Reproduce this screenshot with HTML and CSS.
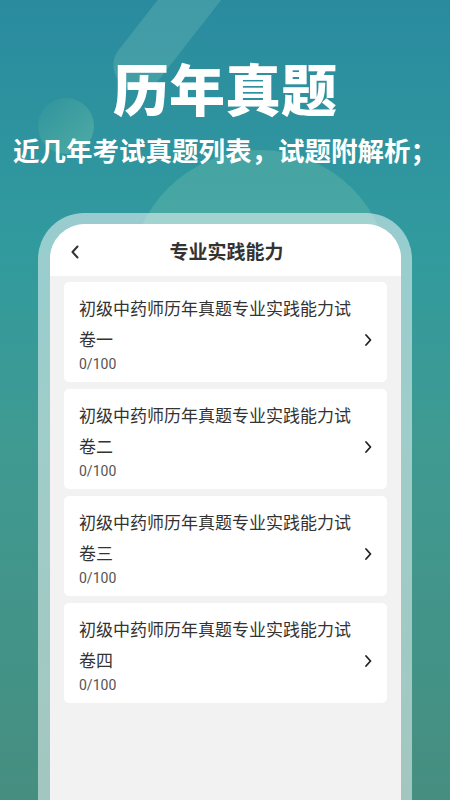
FILE: index.html
```html
<!DOCTYPE html>
<html lang="zh-CN">
<head>
    <meta charset="UTF-8">
    <meta name="viewport" content="width=device-width, initial-scale=1.0">
    <title>历年真题</title>
    <link rel="stylesheet" href="styles.css">
</head>
<body>

    <div class="page">
        <!-- background decoration -->
        <div class="deco deco-bar"></div>
        <div class="deco deco-dot"></div>
        <div class="deco deco-big"></div>

        <div class="hero">
            <h1 class="hero-title">历年真题</h1>
            <p class="hero-sub">近几年考试真题列表，试题附解析；</p>
        </div>

        <div class="phone">
            <div class="screen">
                <div class="topbar">
                    <svg class="back" width="12" height="16" viewBox="0 0 12 16">
                        <path d="M8.5 2.5 L3.5 8 L8.5 13.5" fill="none" stroke="#333" stroke-width="2" stroke-linecap="round" stroke-linejoin="round"/>
                    </svg>
                    <span class="topbar-title">专业实践能力</span>
                </div>

                <div class="list">
                    <div class="paper">
                        <div class="paper-info">
                            <div class="paper-name">初级中药师历年真题专业实践能力试卷一</div>
                            <div class="paper-score">0/100</div>
                        </div>
                        <svg class="arrow" width="10" height="14" viewBox="0 0 10 14">
                            <path d="M3 2 L7.5 7 L3 12" fill="none" stroke="#222" stroke-width="1.8" stroke-linecap="round" stroke-linejoin="round"/>
                        </svg>
                    </div>
                    <div class="paper">
                        <div class="paper-info">
                            <div class="paper-name">初级中药师历年真题专业实践能力试卷二</div>
                            <div class="paper-score">0/100</div>
                        </div>
                        <svg class="arrow" width="10" height="14" viewBox="0 0 10 14">
                            <path d="M3 2 L7.5 7 L3 12" fill="none" stroke="#222" stroke-width="1.8" stroke-linecap="round" stroke-linejoin="round"/>
                        </svg>
                    </div>
                    <div class="paper">
                        <div class="paper-info">
                            <div class="paper-name">初级中药师历年真题专业实践能力试卷三</div>
                            <div class="paper-score">0/100</div>
                        </div>
                        <svg class="arrow" width="10" height="14" viewBox="0 0 10 14">
                            <path d="M3 2 L7.5 7 L3 12" fill="none" stroke="#222" stroke-width="1.8" stroke-linecap="round" stroke-linejoin="round"/>
                        </svg>
                    </div>
                    <div class="paper">
                        <div class="paper-info">
                            <div class="paper-name">初级中药师历年真题专业实践能力试卷四</div>
                            <div class="paper-score">0/100</div>
                        </div>
                        <svg class="arrow" width="10" height="14" viewBox="0 0 10 14">
                            <path d="M3 2 L7.5 7 L3 12" fill="none" stroke="#222" stroke-width="1.8" stroke-linecap="round" stroke-linejoin="round"/>
                        </svg>
                    </div>
                </div>
            </div>
        </div>
    </div>

</body>
</html>
```

FILE: styles.css
```css
/* Global Styles */
* {
    margin: 0;
    padding: 0;
    box-sizing: border-box;
}

body {
    width: 450px;
    height: 800px;
    overflow: hidden;
    font-family: "Noto Sans CJK SC", "Noto Sans", sans-serif;
}

.page {
    position: relative;
    width: 450px;
    height: 800px;
    overflow: hidden;
    display: flex;
    flex-direction: column;
    background: linear-gradient(180deg, #2a8b9f 0%, #319a9e 30%, #3f9a92 55%, #468e80 100%);
}

/* decorative shapes behind the content */
.deco {
    position: absolute;
}

.deco-bar {
    left: 98px;
    top: -80px;
    width: 50px;
    height: 165px;
    border-radius: 25px;
    background: rgba(160, 220, 200, 0.2);
    transform: rotate(38deg);
    transform-origin: 50% 100%;
}

.deco-dot {
    left: 38px;
    top: 98px;
    width: 56px;
    height: 56px;
    border-radius: 50%;
    background: linear-gradient(135deg, rgba(60, 160, 150, 0.15), rgba(120, 200, 170, 0.45));
}

.deco-big {
    left: 130px;
    top: 150px;
    width: 260px;
    height: 260px;
    border-radius: 50%;
    background: rgba(140, 210, 180, 0.25);
}

.hero {
    position: relative;
    text-align: center;
    color: #fff;
    padding-top: 54px;
    height: 213px;
}

.hero-title {
    font-size: 56px;
    font-weight: 900;
    line-height: 66px;
}

.hero-sub {
    margin-top: 12px;
    font-size: 26.5px;
    font-weight: 700;
    line-height: 36px;
    white-space: nowrap;
}

/* phone mock */
.phone {
    position: relative;
    flex: 1;
    margin: 0 38px;
    padding: 11px 11px 0 12px;
    border-radius: 46px 46px 0 0;
    background: rgba(255, 255, 255, 0.5);
    display: flex;
}

.screen {
    flex: 1;
    background-color: #f2f2f2;
    border-radius: 35px 35px 0 0;
    overflow: hidden;
    display: flex;
    flex-direction: column;
}

.topbar {
    position: relative;
    height: 52px;
    background-color: #fff;
    display: flex;
    align-items: center;
    justify-content: center;
}

.back {
    position: absolute;
    left: 19px;
    top: 20px;
}

.topbar-title {
    font-size: 19px;
    font-weight: 700;
    color: #333;
    margin-left: 2px;
}

.list {
    display: flex;
    flex-direction: column;
    gap: 7px;
    padding: 6px 14px 0;
}

.paper {
    background-color: #fff;
    border-radius: 5px;
    min-height: 100px;
    padding: 10px 14px 8px 15px;
    display: flex;
    align-items: center;
    justify-content: space-between;
}

.paper-info {
    flex: 1;
}

.paper-name {
    font-size: 17px;
    line-height: 31px;
    color: #333;
}

.paper-score {
    font-family: Roboto, "Noto Sans", sans-serif;
    font-size: 14px;
    line-height: 20px;
    color: #555;
}

.arrow {
    flex-shrink: 0;
    margin-top: 14px;
}
```
